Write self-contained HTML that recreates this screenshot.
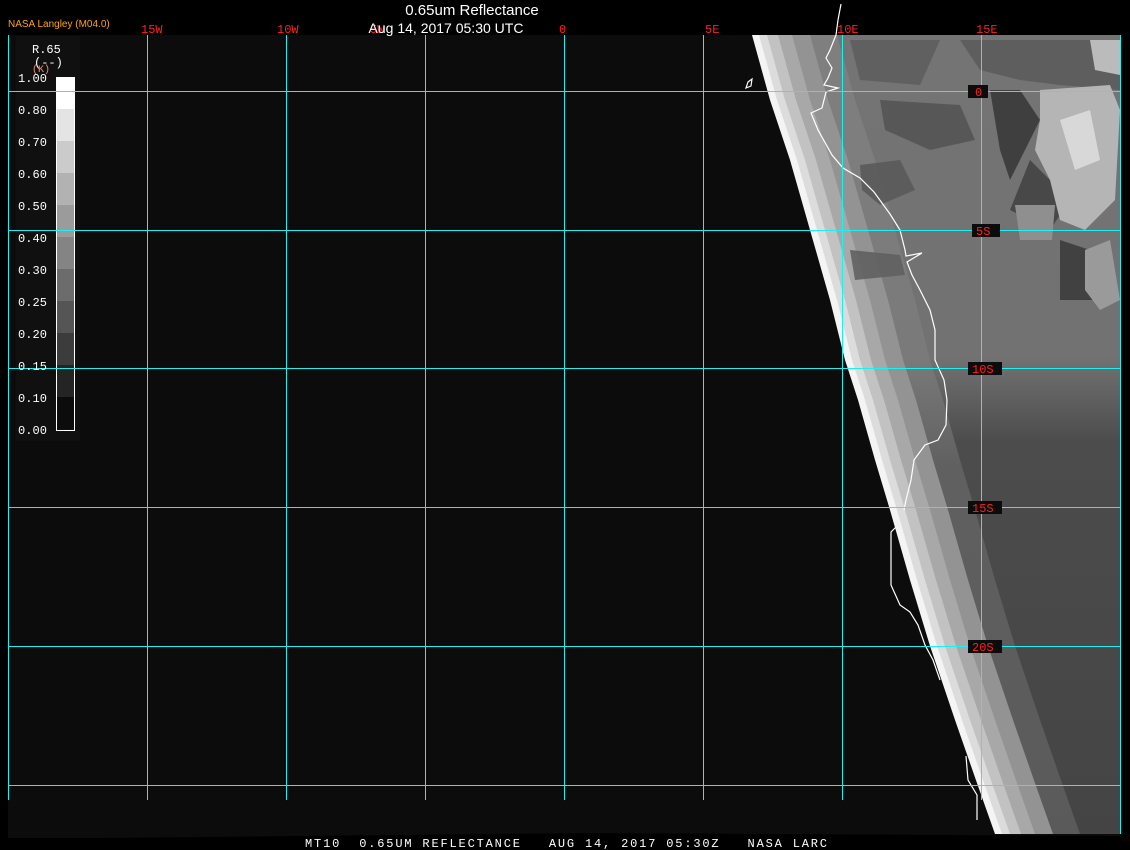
<!DOCTYPE html>
<html><head><meta charset="utf-8"><style>
html,body{margin:0;padding:0;background:#000;width:1130px;height:850px;overflow:hidden}
svg{display:block}
text{font-family:"Liberation Mono","DejaVu Sans Mono",monospace}
</style></head><body>
<svg width="1130" height="850" viewBox="0 0 1130 850" xmlns="http://www.w3.org/2000/svg">
<defs>
<polygon id="land" points="752,35 770,100 790,160 810,230 830,300 845,360 858,400 875,460 890,510 910,580 930,646 955,720 978,786 995,834 1400,834 1400,35"/>
<clipPath id="cp"><rect x="0" y="35" width="1120" height="800"/></clipPath>
<linearGradient id="base" x1="0" y1="0" x2="0" y2="850" gradientUnits="userSpaceOnUse">
<stop offset="0" stop-color="#747474"/><stop offset="0.42" stop-color="#727272"/><stop offset="0.52" stop-color="#4c4c4c"/><stop offset="1" stop-color="#444"/>
</linearGradient>
<linearGradient id="mid" x1="0" y1="0" x2="0" y2="850" gradientUnits="userSpaceOnUse">
<stop offset="0" stop-color="#808080"/><stop offset="0.42" stop-color="#7a7a7a"/><stop offset="0.55" stop-color="#606060"/><stop offset="1" stop-color="#5a5a5a"/>
</linearGradient>
</defs>
<rect width="1130" height="850" fill="#000"/>
<polygon points="8,35 1120,35 1120,836 600,833 100,838 8,838" fill="#0c0c0c"/>
<g clip-path="url(#cp)">
<use href="#land" fill="#f4f4f4"/>
<use href="#land" fill="#dcdcdc" transform="translate(7,0)"/>
<use href="#land" fill="#c2c2c2" transform="translate(15,0)"/>
<use href="#land" fill="#a8a8a8" transform="translate(26,0)"/>
<use href="#land" fill="#939393" transform="translate(40,0)"/>
<use href="#land" fill="url(#mid)" transform="translate(58,0)"/>
<use href="#land" fill="url(#base)" transform="translate(85,0)"/>
</g>
<!-- dark patches upper -->
<g opacity="0.9">
<path d="M880,100 L960,105 L975,140 L930,150 L885,130Z" fill="#555"/>
<path d="M860,165 L900,160 L915,190 L880,205 L862,190Z" fill="#5a5a5a"/>
<path d="M850,40 L940,40 L920,85 L860,80Z" fill="#5e5e5e"/>
<path d="M990,90 L1020,90 L1040,120 L1010,180 L1000,150Z" fill="#3a3a3a"/>
<path d="M1030,160 L1070,200 L1050,230 L1010,210Z" fill="#444"/>
<path d="M960,40 L1120,40 L1120,90 L1060,85 L1020,80 L980,70Z" fill="#5c5c5c"/>
<path d="M850,250 L900,255 L905,275 L855,280Z" fill="#606060"/>
<path d="M1060,240 L1090,250 L1100,300 L1060,300Z" fill="#3c3c3c"/>
</g>
<!-- bright clouds -->
<path d="M1040,90 L1110,85 L1120,110 L1115,200 L1085,230 L1060,220 L1050,180 L1035,150 L1040,120Z" fill="#b5b5b5"/>
<path d="M1060,120 L1090,110 L1100,160 L1075,170Z" fill="#d8d8d8"/>
<path d="M1085,250 L1110,240 L1120,300 L1100,310 L1085,290Z" fill="#9a9a9a"/>
<path d="M1015,205 L1055,205 L1052,240 L1020,240Z" fill="#8f8f8f"/>
<path d="M1090,40 L1120,40 L1120,75 L1095,70Z" fill="#bbb"/>
<!-- coastline -->
<g fill="none" stroke="#fff" stroke-width="1.2">
<path d="M841,4 L838,20 L836,35 L830,50 L826,58 L832,68 L828,78 L824,85 L838,88 L826,92 L822,108 L811,113 L818,130 L832,155 L843,168 L860,178 L874,192 L890,214 L900,230 L905,250 L906,256 L922,253 L907,262 L912,275 L920,290 L930,310 L935,330 L935,360 L944,380 L947,400 L946,425 L938,440 L925,445 L914,460 L911,480 L906,500 L904,510"/>
<path d="M896,527 L891,532 L891,585 L900,605 L910,612 L918,625 L925,645 L933,660 L940,680"/>
<path d="M966,756 L968,780 L977,795 L977,820"/>
<path d="M748,82 L752,79 L751,86 L746,88Z"/>
</g>
<!-- grid -->
<g stroke="#1ef0f0" stroke-width="1">
<line x1="8.5" y1="35" x2="8.5" y2="800"/>
<line x1="147.5" y1="35" x2="147.5" y2="800"/>
<line x1="286.5" y1="35" x2="286.5" y2="800"/>
<line x1="425.5" y1="35" x2="425.5" y2="800"/>
<line x1="564.5" y1="35" x2="564.5" y2="800"/>
<line x1="703.5" y1="35" x2="703.5" y2="800"/>
<line x1="842.5" y1="35" x2="842.5" y2="800"/>
<line x1="981.5" y1="35" x2="981.5" y2="800"/>
<line x1="1120.5" y1="35" x2="1120.5" y2="834"/>
<line x1="8" y1="91.5" x2="1120" y2="91.5"/>
<line x1="8" y1="230.5" x2="1120" y2="230.5"/>
<line x1="8" y1="368.5" x2="1120" y2="368.5"/>
<line x1="8" y1="507.5" x2="1120" y2="507.5"/>
<line x1="8" y1="646.5" x2="1120" y2="646.5"/>
<line x1="8" y1="785.5" x2="1120" y2="785.5"/>
</g>
<g fill="#0c0c0c">
<rect x="968" y="85" width="20" height="13"/>
<rect x="972" y="224" width="28" height="13"/>
<rect x="968" y="362" width="34" height="13"/>
<rect x="968" y="501" width="34" height="13"/>
<rect x="968" y="640" width="34" height="13"/>
</g>
<g fill="#ff2020" font-size="12">
<text x="975" y="96">0</text>
<text x="976" y="235">5S</text>
<text x="972" y="373">10S</text>
<text x="972" y="512">15S</text>
<text x="972" y="651">20S</text>
<text x="141" y="33">15W</text>
<text x="277" y="33">10W</text>
<text x="370" y="33">5W</text>
<text x="559" y="33">0</text>
<text x="705" y="33">5E</text>
<text x="837" y="33">10E</text>
<text x="976" y="33">15E</text>
</g>
<text x="472" y="15" fill="#fff" font-size="15" text-anchor="middle" style="font-family:'Liberation Sans',sans-serif">0.65um Reflectance</text>
<text x="446" y="33" fill="#fff" font-size="14" text-anchor="middle" style="font-family:'Liberation Sans',sans-serif">Aug 14, 2017 05:30 UTC</text>
<text x="8" y="27" fill="#ffa500" font-size="10" style="font-family:'Liberation Sans',sans-serif">NASA Langley (M04.0)</text>
<!-- colorbar -->
<rect x="16" y="36" width="64" height="405" fill="#101010"/>
<g fill="#fff" font-size="12">
<text x="32" y="53">R.65</text>
<text x="34" y="66">(--)</text>
</g>
<text x="32" y="72" fill="#f09070" font-size="10">(K)</text>
<rect x="56" y="77" width="18" height="32" fill="#fff"/>
<rect x="56" y="109" width="18" height="32" fill="#e4e4e4"/>
<rect x="56" y="141" width="18" height="32" fill="#cbcbcb"/>
<rect x="56" y="173" width="18" height="32" fill="#b2b2b2"/>
<rect x="56" y="205" width="18" height="32" fill="#9b9b9b"/>
<rect x="56" y="237" width="18" height="32" fill="#848484"/>
<rect x="56" y="269" width="18" height="32" fill="#6c6c6c"/>
<rect x="56" y="301" width="18" height="32" fill="#555"/>
<rect x="56" y="333" width="18" height="32" fill="#3c3c3c"/>
<rect x="56" y="365" width="18" height="32" fill="#242424"/>
<rect x="56" y="397" width="18" height="32" fill="#0c0c0c"/>
<rect x="56.5" y="77.5" width="18" height="353" fill="none" stroke="#fff"/>
<line x1="8" y1="91.5" x2="80" y2="91.5" stroke="#1ef0f0"/>
<line x1="8" y1="230.5" x2="80" y2="230.5" stroke="#1ef0f0"/>
<line x1="8" y1="368.5" x2="80" y2="368.5" stroke="#1ef0f0"/>
<g fill="#fff" font-size="12">
<text x="18" y="82" textLength="29">1.00</text>
<text x="18" y="114" textLength="29">0.80</text>
<text x="18" y="146" textLength="29">0.70</text>
<text x="18" y="178" textLength="29">0.60</text>
<text x="18" y="210" textLength="29">0.50</text>
<text x="18" y="242" textLength="29">0.40</text>
<text x="18" y="274" textLength="29">0.30</text>
<text x="18" y="306" textLength="29">0.25</text>
<text x="18" y="338" textLength="29">0.20</text>
<text x="18" y="370" textLength="29">0.15</text>
<text x="18" y="402" textLength="29">0.10</text>
<text x="18" y="434" textLength="29">0.00</text>
</g>
<text x="305" y="847" fill="#fff" font-size="12" textLength="522" lengthAdjust="spacing" xml:space="preserve">MT10  0.65UM REFLECTANCE   AUG 14, 2017 05:30Z   NASA LARC</text>
</svg>
</body></html>
